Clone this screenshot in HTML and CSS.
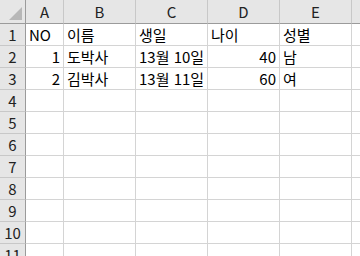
FILE: index.html
```html
<!DOCTYPE html>
<html lang="ko">
<head>
    <meta charset="UTF-8">
    <title>Sheet1</title>
    <link rel="stylesheet" href="styles.css">
</head>
<body>
<div class="sheet">
    <div class="corner"><span class="tri"></span></div>
    <div class="col-head">A</div>
    <div class="col-head">B</div>
    <div class="col-head">C</div>
    <div class="col-head">D</div>
    <div class="col-head">E</div>
    <div class="col-head"></div>

    <div class="row-head">1</div>
    <div class="cell">NO</div>
    <div class="cell">이름</div>
    <div class="cell">생일</div>
    <div class="cell">나이</div>
    <div class="cell">성별</div>
    <div class="cell"></div>

    <div class="row-head">2</div>
    <div class="cell num">1</div>
    <div class="cell">도박사</div>
    <div class="cell">13월 10일</div>
    <div class="cell num">40</div>
    <div class="cell">남</div>
    <div class="cell"></div>

    <div class="row-head">3</div>
    <div class="cell num">2</div>
    <div class="cell">김박사</div>
    <div class="cell">13월 11일</div>
    <div class="cell num">60</div>
    <div class="cell">여</div>
    <div class="cell"></div>

    <div class="row-head">4</div>
    <div class="cell"></div><div class="cell"></div><div class="cell"></div><div class="cell"></div><div class="cell"></div><div class="cell"></div>
    <div class="row-head">5</div>
    <div class="cell"></div><div class="cell"></div><div class="cell"></div><div class="cell"></div><div class="cell"></div><div class="cell"></div>
    <div class="row-head">6</div>
    <div class="cell"></div><div class="cell"></div><div class="cell"></div><div class="cell"></div><div class="cell"></div><div class="cell"></div>
    <div class="row-head">7</div>
    <div class="cell"></div><div class="cell"></div><div class="cell"></div><div class="cell"></div><div class="cell"></div><div class="cell"></div>
    <div class="row-head">8</div>
    <div class="cell"></div><div class="cell"></div><div class="cell"></div><div class="cell"></div><div class="cell"></div><div class="cell"></div>
    <div class="row-head">9</div>
    <div class="cell"></div><div class="cell"></div><div class="cell"></div><div class="cell"></div><div class="cell"></div><div class="cell"></div>
    <div class="row-head">10</div>
    <div class="cell"></div><div class="cell"></div><div class="cell"></div><div class="cell"></div><div class="cell"></div><div class="cell"></div>
    <div class="row-head">11</div>
    <div class="cell"></div><div class="cell"></div><div class="cell"></div><div class="cell"></div><div class="cell"></div><div class="cell"></div>
</div>
</body>
</html>
```

FILE: styles.css
```css
html, body {
    margin: 0;
    padding: 0;
    background: #ffffff;
    overflow: hidden;
}
.sheet {
    display: grid;
    width: 360px;
    overflow: hidden;
    grid-template-columns: 26px 38px 72px 72px 72px 72px 40px;
    grid-template-rows: 24px repeat(11, 22px);
    font-family: "Noto Sans CJK KR", "Noto Sans", sans-serif;
    font-size: 15px;
    color: #000;
}
.sheet > div {
    box-sizing: border-box;
    overflow: hidden;
    white-space: nowrap;
}
.corner {
    background: #e6e6e6;
    border-right: 1px solid #9b9b9b;
    border-bottom: 1px solid #9b9b9b;
    position: relative;
}
.tri {
    position: absolute;
    right: 3px;
    bottom: 3px;
    width: 0;
    height: 0;
    border-left: 13px solid transparent;
    border-bottom: 13px solid #b7b7b7;
}
.col-head {
    background: #e6e6e6;
    border-bottom: 1px solid #9b9b9b;
    border-right: 1px solid #c8c8c8;
    text-align: center;
    line-height: 23px;
    color: #222;
}
.row-head {
    background: #e6e6e6;
    border-right: 1px solid #9b9b9b;
    border-bottom: 1px solid #c8c8c8;
    text-align: center;
    line-height: 21px;
    color: #222;
}
.cell {
    border-right: 1px solid #d4d4d4;
    border-bottom: 1px solid #d4d4d4;
    line-height: 21px;
    padding: 0 3px;
}
.num {
    text-align: right;
}
```
